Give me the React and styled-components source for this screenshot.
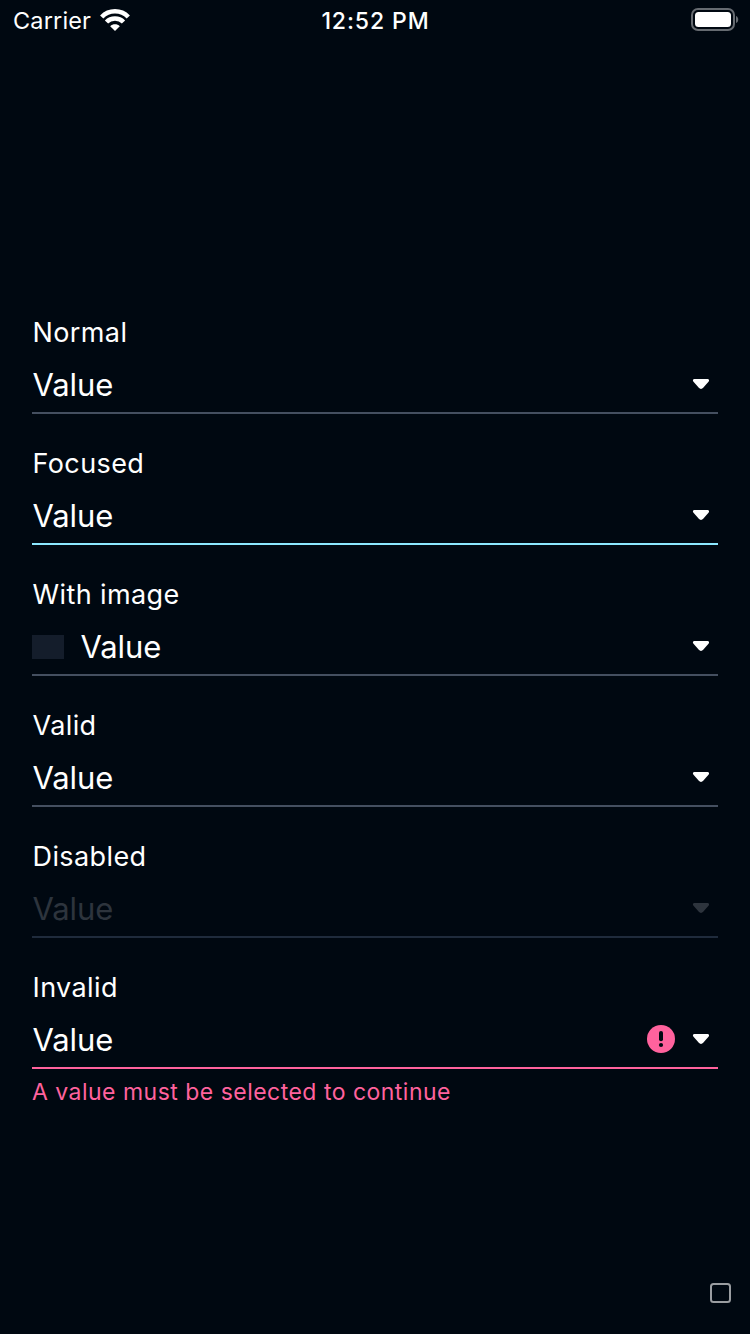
import React from "react";
import styled, { createGlobalStyle } from "styled-components";

const GlobalStyle = createGlobalStyle`
  * { box-sizing: border-box; }
  body { margin: 0; background: #000811; }
`;

const Screen = styled.div`
  height: 1334px;
  display: flex;
  flex-direction: column;
  background: #000811;
  color: #fff;
  font-family: Inter, "Liberation Sans", sans-serif;
  overflow: hidden;
`;

const StatusBar = styled.header`
  height: 40px;
  padding: 0 11px 0 13px;
  display: grid;
  grid-template-columns: 1fr auto 1fr;
  align-items: center;
  font-size: 24px;
  line-height: 40px;
`;

const Carrier = styled.div`
  display: flex;
  align-items: center;
  gap: 9px;
  font-size: 23.5px;
  letter-spacing: 0.15px;
  padding-top: 1px;
`;

const Clock = styled.time`
  font-weight: 550;
  font-size: 23px;
  line-height: 40px;
  letter-spacing: 0.9px;
  padding-top: 1px;
  margin-right: 1px;
`;

const Battery = styled.svg`
  justify-self: end;
  margin-bottom: 2px;
`;

const Wifi = styled.svg`
  margin-bottom: 2px;
`;

const Form = styled.main`
  flex: 1;
  padding: 274px 32px 0;
  display: flex;
  flex-direction: column;
  gap: 31px;
`;

const Field = styled.div`
  display: flex;
  flex-direction: column;
`;

const Label = styled.label`
  height: 36px;
  padding-left: 0.5px;
  line-height: 38px;
  font-size: 27px;
  letter-spacing: 0.4px;
  color: #fff;
`;

const Control = styled.div`
  height: 64px;
  padding: 6px 8px 0 0;
  display: flex;
  align-items: center;
  border-bottom: 2px solid ${(p) => p.$line};
  color: ${(p) => (p.$disabled ? "#2d343d" : "#fff")};
`;

const Value = styled.span`
  flex: 1;
  padding: 2px 0 0 0.5px;
  font-size: 31px;
  line-height: 40px;
  letter-spacing: -0.1px;
`;

const Thumb = styled.span`
  width: 32px;
  height: 24px;
  margin: 2px 16px 0 0;
  background: #141d2b;
`;

const AlertIcon = styled.svg`
  margin-right: 17px;
`;

const ErrorText = styled.p`
  margin: 8px 0 0;
  font-size: 23px;
  line-height: 30px;
  letter-spacing: 0.48px;
  color: #ff629d;
`;

const Footer = styled.footer`
  height: 51px;
  padding: 0 19px;
  display: flex;
  justify-content: flex-end;
`;

const Square = styled.span`
  width: 21px;
  height: 20px;
  border: 2px solid #9a9da1;
  border-radius: 3.5px;
`;

const fields = [
  { label: "Normal" },
  { label: "Focused", line: "#8ce8ff" },
  { label: "With image", image: true },
  { label: "Valid" },
  { label: "Disabled", disabled: true, line: "#1f2b3c" },
  { label: "Invalid", line: "#ff629d", error: "A value must be selected to continue" },
];

function SelectField({ label, line = "#444f60", image, disabled, error }) {
  return (
    <Field>
      <Label>{label}</Label>
      <Control $line={line} $disabled={disabled}>
        {image && <Thumb />}
        <Value>Value</Value>
        {error && (
          <AlertIcon width="28" height="28" viewBox="0 0 28 28">
            <circle cx="14" cy="14" r="14" fill="#ff629d" />
            <path d="M14 8v6.200" stroke="#000811" strokeWidth="4" strokeLinecap="round" />
            <circle cx="14" cy="20" r="2.1" fill="#000811" />
          </AlertIcon>
        )}
        <svg width="18" height="12" viewBox="0 0 18 12">
          <path d="M2.300 1h13.400c1.300 0 1.800 1.600 1 2.600l-5.500 6.200c-1.200 1.500-3.200 1.500-4.400 0L1.300 3.600C.500 2.600 1 1 2.300 1z" fill="currentColor" />
        </svg>
      </Control>
      {error && <ErrorText>{error}</ErrorText>}
    </Field>
  );
}

export default function App() {
  return (
    <Screen>
      <GlobalStyle />
      <StatusBar>
        <Carrier>
          Carrier
          <Wifi width="30" height="22" viewBox="0 0 30 22" fill="none" stroke="#fff" strokeWidth="4.500">
            <path d="M1.700 8C9 .400 21 .400 28.300 8M6.500 13C11 8.300 19 8.300 23.500 13" />
            <path d="M15 22l-4.800-4.800c2.700-2.500 6.900-2.500 9.600 0z" fill="#fff" stroke="none" />
          </Wifi>
        </Carrier>
        <Clock>12:52 PM</Clock>
        <Battery width="48" height="23" viewBox="0 0 48 23">
          <rect x="1" y="1" width="42" height="21" rx="6" fill="none" stroke="#666b71" strokeWidth="2" />
          <rect x="4" y="4" width="36" height="15" rx="3.500" fill="#fff" />
          <path d="M45 8c3 1 3 6 0 7z" fill="#666b71" />
        </Battery>
      </StatusBar>
      <Form>
        {fields.map((f) => (
          <SelectField key={f.label} {...f} />
        ))}
      </Form>
      <Footer>
        <Square />
      </Footer>
    </Screen>
  );
}
